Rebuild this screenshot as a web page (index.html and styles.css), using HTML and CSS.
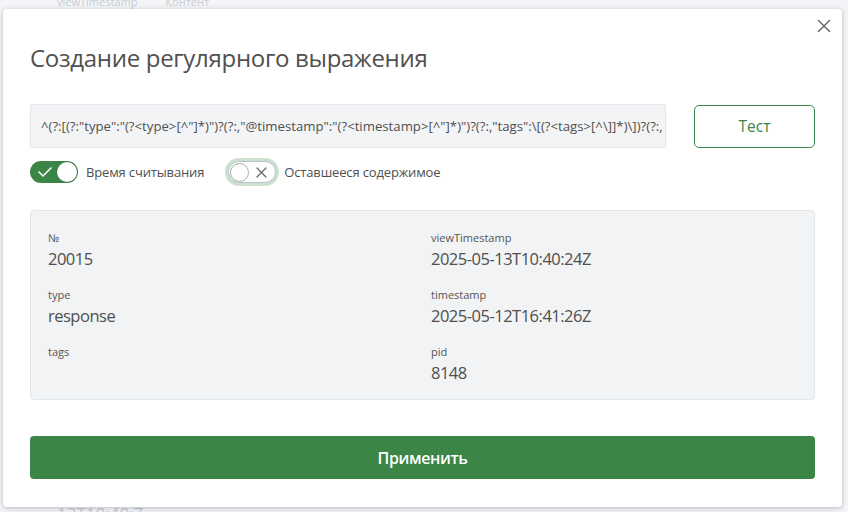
FILE: index.html
```html
<!DOCTYPE html>
<html lang="ru">
<head>
<meta charset="utf-8">
<title>Создание регулярного выражения</title>
<link rel="stylesheet" href="styles.css">
</head>
<body>
<div class="page">
  <div class="page-head">
    <span class="ph-a">viewTimestamp</span>
    <span class="ph-b">Контент</span>
  </div>
  <div class="page-foot">13T10:40:Z</div>
</div>

<div class="modal">
  <button class="close" aria-label="Закрыть">
    <svg width="14" height="14" viewBox="0 0 14 14"><path d="M1.5 1.5 L12.5 12.5 M12.5 1.5 L1.5 12.5" stroke="#5f6368" stroke-width="1.4" fill="none" stroke-linecap="round"/></svg>
  </button>
  <h1 class="title">Создание регулярного выражения</h1>

  <div class="regex-row">
    <div class="regex-input">^(?:[(?:"type":"(?&lt;type&gt;[^"]*)")?(?:,"@timestamp":"(?&lt;timestamp&gt;[^"]*)")?(?:,"tags":\[(?&lt;tags&gt;[^\]]*)\])?(?:,</div>
    <button class="btn-test">Тест</button>
  </div>

  <div class="toggles">
    <label class="toggle">
      <span class="switch on">
        <svg class="check" width="14" height="10" viewBox="0 0 14 10"><path d="M1 5 L5 9 L13 1" stroke="#fff" stroke-width="1.6" fill="none" stroke-linecap="round" stroke-linejoin="round"/></svg>
        <span class="knob"></span>
      </span>
      <span class="toggle-label">Время считывания</span>
    </label>
    <label class="toggle">
      <span class="ring">
        <span class="switch off">
          <span class="knob"></span>
          <svg class="cross" width="11" height="11" viewBox="0 0 11 11"><path d="M1 1 L10 10 M10 1 L1 10" stroke="#6b6f73" stroke-width="1.4" fill="none" stroke-linecap="round"/></svg>
        </span>
      </span>
      <span class="toggle-label">Оставшееся содержимое</span>
    </label>
  </div>

  <div class="result">
    <div class="field"><div class="f-label">№</div><div class="f-value">20015</div></div>
    <div class="field"><div class="f-label">viewTimestamp</div><div class="f-value">2025-05-13T10:40:24Z</div></div>
    <div class="field"><div class="f-label">type</div><div class="f-value">response</div></div>
    <div class="field"><div class="f-label">timestamp</div><div class="f-value">2025-05-12T16:41:26Z</div></div>
    <div class="field"><div class="f-label">tags</div><div class="f-value"></div></div>
    <div class="field"><div class="f-label">pid</div><div class="f-value">8148</div></div>
  </div>

  <button class="btn-apply">Применить</button>
</div>
</body>
</html>
```

FILE: styles.css
```css
* { box-sizing: border-box; }

html, body {
  margin: 0;
  padding: 0;
}

body {
  width: 848px;
  height: 512px;
  overflow: hidden;
  position: relative;
  background: #f4f5f7;
  font-family: "Open Sans", "Noto Sans", sans-serif;
  color: #4f4f4f;
}

.page {
  height: 512px;
  display: flex;
  flex-direction: column;
  justify-content: space-between;
  color: #c9ccd1;
}

.page-head {
  display: flex;
  gap: 28px;
  padding-left: 57px;
  margin-top: -5px;
  font-size: 11px;
  line-height: 14px;
}

.page-foot {
  padding-left: 57px;
  margin-bottom: -12px;
  font-size: 17px;
  line-height: 20px;
}

.modal {
  position: absolute;
  left: 3px;
  top: 9px;
  width: 839px;
  height: 498px;
  background: #ffffff;
  border-radius: 4px;
  box-shadow: 0 1px 5px rgba(60, 70, 90, 0.35);
  padding: 31px 27px 27px 27px;
  display: flex;
  flex-direction: column;
}

.close {
  position: absolute;
  right: 11px;
  top: 10px;
  width: 14px;
  height: 14px;
  padding: 0;
  border: 0;
  background: none;
  display: flex;
}

.title {
  margin: 0;
  font-size: 24px;
  line-height: 36px;
  font-weight: 400;
  color: #505050;
  letter-spacing: -0.3px;
}

.regex-row {
  display: flex;
  align-items: center;
  gap: 28px;
  margin-top: 28px;
}

.regex-input {
  width: 636px;
  height: 44px;
  background: #f3f4f5;
  border: 1px solid #e6e8eb;
  border-radius: 2px;
  padding: 0 10px;
  font-size: 13.2px;
  line-height: 42px;
  color: #505050;
  white-space: nowrap;
  overflow: hidden;
}

.btn-test {
  width: 121px;
  height: 43px;
  border: 1.5px solid #3d8a4b;
  border-radius: 5px;
  background: #ffffff;
  color: #3b8547;
  font-family: "Open Sans", "Noto Sans", sans-serif;
  font-size: 15.5px;
  padding: 0;
}

.toggles {
  display: flex;
  align-items: center;
  gap: 24px;
  margin-top: 11px;
  height: 26px;
}

.toggle {
  display: flex;
  align-items: center;
  gap: 8px;
}

.toggle-label {
  font-size: 13px;
  color: #505050;
  letter-spacing: -0.15px;
}

.switch {
  width: 48px;
  height: 22px;
  border-radius: 11px;
  display: flex;
  align-items: center;
  position: relative;
}

.switch.on {
  background: #3b8547;
  padding: 0 1px 0 8px;
  justify-content: space-between;
}

.switch.on .knob {
  width: 20px;
  height: 20px;
  border-radius: 50%;
  background: #ffffff;
  box-shadow: 0 0 1px rgba(0, 0, 0, 0.3);
}

.ring {
  display: flex;
  border-radius: 14px;
  padding: 3px;
  margin-left: -3px;
  margin-right: -3px;
  background: #cde1d1;
}

.switch.off {
  background: #ffffff;
  border: 1px solid #bfc3c7;
  padding: 0 8px 0 1px;
  justify-content: space-between;
}

.switch.off .knob {
  width: 19px;
  height: 19px;
  border-radius: 50%;
  background: #ffffff;
  border: 1px solid #a9aeb3;
}

.result {
  margin-top: 25px;
  height: 190px;
  background: #f2f3f4;
  border: 1px solid #e3e6ea;
  border-radius: 4px;
  padding: 20px 17px 0 17px;
  display: grid;
  grid-template-columns: 383px 1fr;
  grid-auto-rows: 39px;
  row-gap: 18px;
}

.f-label {
  font-size: 11px;
  line-height: 14px;
  color: #555555;
}

.f-value {
  margin-top: 3px;
  font-size: 16.5px;
  line-height: 22px;
  color: #4f4f4f;
  letter-spacing: -0.5px;
}

.btn-apply {
  margin-top: 36px;
  height: 43px;
  width: 100%;
  border: 0;
  border-radius: 4px;
  background: #3b8547;
  color: #ffffff;
  font-family: "Open Sans", "Noto Sans", sans-serif;
  font-size: 16px;
  font-weight: 600;
  letter-spacing: -0.4px;
  padding: 0;
}
```
